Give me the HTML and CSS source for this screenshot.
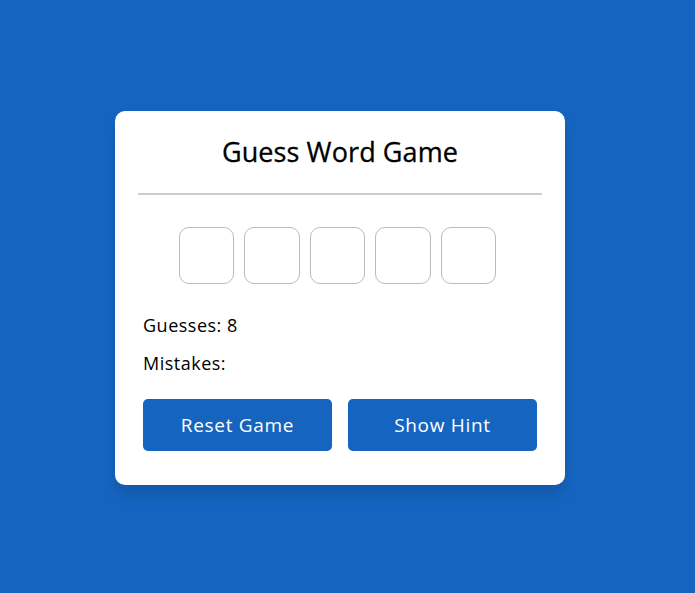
FILE: index.html
```html
<!DOCTYPE html>
<html lang="en">
<head>
<meta charset="utf-8">
<title>Guess Word Game</title>
<link rel="stylesheet" href="styles.css">
</head>
<body>
<div class="card">
  <h1 class="title">Guess Word Game</h1>
  <div class="divider"></div>
  <div class="boxes">
    <div class="box"></div>
    <div class="box"></div>
    <div class="box"></div>
    <div class="box"></div>
    <div class="box"></div>
  </div>
  <p class="stat">Guesses: <span>8</span></p>
  <p class="stat">Mistakes: <span></span></p>
  <div class="actions">
    <button class="btn">Reset Game</button>
    <button class="btn">Show Hint</button>
  </div>
</div>
</body>
</html>
```
FILE: styles.css
```css
* { box-sizing: border-box; }
html, body { margin: 0; height: 100%; }
body {
  background: #1565c0;
  display: flex;
  align-items: center;
  justify-content: center;
  padding: 3px 15px 0 0;
  font-family: "Open Sans", "Liberation Sans", sans-serif;
  color: #000;
}
.card {
  width: 450px;
  background: #fff;
  border-radius: 10px;
  padding: 24px 28px 34px;
  box-shadow: 0 10px 15px rgba(0, 0, 0, 0.12);
}
.title {
  margin: 0;
  text-align: center;
  font-size: 27px;
  font-weight: 500;
  line-height: 34px;
  letter-spacing: 0.1px;
  -webkit-text-stroke: 0.3px #000;
}
.divider {
  height: 2px;
  background: #ccc;
  margin: 24px -5px 0;
}
.boxes {
  display: flex;
  justify-content: center;
  gap: 10px;
  margin: 32px 0 0 -5px;
}
.box {
  width: 55.5px;
  height: 57px;
  border: 1px solid #bbb;
  border-radius: 10px;
}
.stat {
  margin: 0;
  font-size: 18px;
  line-height: 24px;
  letter-spacing: 0.5px;
}
.stat:first-of-type { margin-top: 29px; }
.stat + .stat { margin-top: 14px; }
.actions {
  display: flex;
  gap: 16px;
  margin-top: 24px;
}
.btn {
  flex: 1;
  height: 52px;
  border: none;
  border-radius: 5px;
  background: #1565c0;
  color: #fff;
  font-family: inherit;
  font-size: 19px;
  letter-spacing: 0.7px;
}
```
